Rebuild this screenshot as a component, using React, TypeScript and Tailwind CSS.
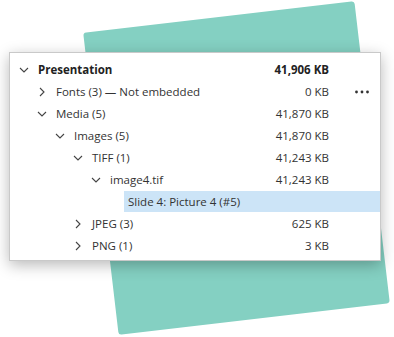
import type { ReactNode } from 'react';

type Row = {
  label: string;
  size?: string;
  depth: number;
  open?: boolean;
  leaf?: boolean;
  bold?: boolean;
  selected?: boolean;
  more?: boolean;
};

const rows: Row[] = [
  { label: 'Presentation', size: '41,906 KB', depth: 0, open: true, bold: true },
  { label: 'Fonts (3) — Not embedded', size: '0 KB', depth: 1, more: true },
  { label: 'Media (5)', size: '41,870 KB', depth: 1, open: true },
  { label: 'Images (5)', size: '41,870 KB', depth: 2, open: true },
  { label: 'TIFF (1)', size: '41,243 KB', depth: 3, open: true },
  { label: 'image4.tif', size: '41,243 KB', depth: 4, open: true },
  { label: 'Slide 4: Picture 4 (#5)', depth: 5, leaf: true, selected: true },
  { label: 'JPEG (3)', size: '625 KB', depth: 3 },
  { label: 'PNG (1)', size: '3 KB', depth: 3 },
];

function Chevron({ open }: { open?: boolean }) {
  return (
    <svg width="16" height="16" viewBox="0 0 16 16" className="shrink-0 text-[#444]">
      {open ? (
        <path d="M4 6 L8 10 L12 6" fill="none" stroke="currentColor" strokeWidth="1.1" />
      ) : (
        <path d="M6 4 L10 8 L6 12" fill="none" stroke="currentColor" strokeWidth="1.1" />
      )}
    </svg>
  );
}

function Dots() {
  return (
    <svg width="16" height="6" viewBox="0 0 16 6" className="text-[#333]">
      <circle cx="2.5" cy="3" r="1.4" fill="currentColor" />
      <circle cx="8" cy="3" r="1.4" fill="currentColor" />
      <circle cx="13.5" cy="3" r="1.4" fill="currentColor" />
    </svg>
  );
}

function TreeRow({ row }: { row: Row }): ReactNode {
  if (row.leaf) {
    return (
      <div className="h-[22px] flex items-start" style={{ paddingLeft: 24 + row.depth * 18 }}>
        <div className="h-[21px] flex-1 bg-[#cce4f7] flex items-center pl-[4px]">
          <span>{row.label}</span>
        </div>
      </div>
    );
  }
  return (
    <div className="h-[22px] flex items-center">
      <div className="flex items-center gap-[6px] flex-1" style={{ paddingLeft: 6 + row.depth * 18 }}>
        <Chevron open={row.open} />
        <span className={row.bold ? 'font-bold text-[#222]' : ''}>{row.label}</span>
      </div>
      <span className={`text-right ${row.bold ? 'font-bold text-[#222]' : ''}`}>{row.size}</span>
      <span className="w-[51px] flex pl-[25px]">{row.more ? <Dots /> : null}</span>
    </div>
  );
}

export default function App() {
  return (
    <div className="relative w-[394px] h-[337px] bg-white overflow-hidden font-['Open_Sans',sans-serif] text-[11.5px] text-[#333]">
      <div className="absolute left-[100px] top-[16px] w-[273px] h-[304px] rounded-[3px] bg-[#84d0c2] -rotate-[6.7deg]" />

      <div className="relative ml-[9px] mt-[52px] w-[372px] h-[209px] bg-white border border-[#c9c9c9] shadow-[0_4px_14px_rgba(0,0,0,0.28)] pt-[6px]">
        {rows.map((r) => (
          <TreeRow key={r.label} row={r} />
        ))}
      </div>
    </div>
  );
}
